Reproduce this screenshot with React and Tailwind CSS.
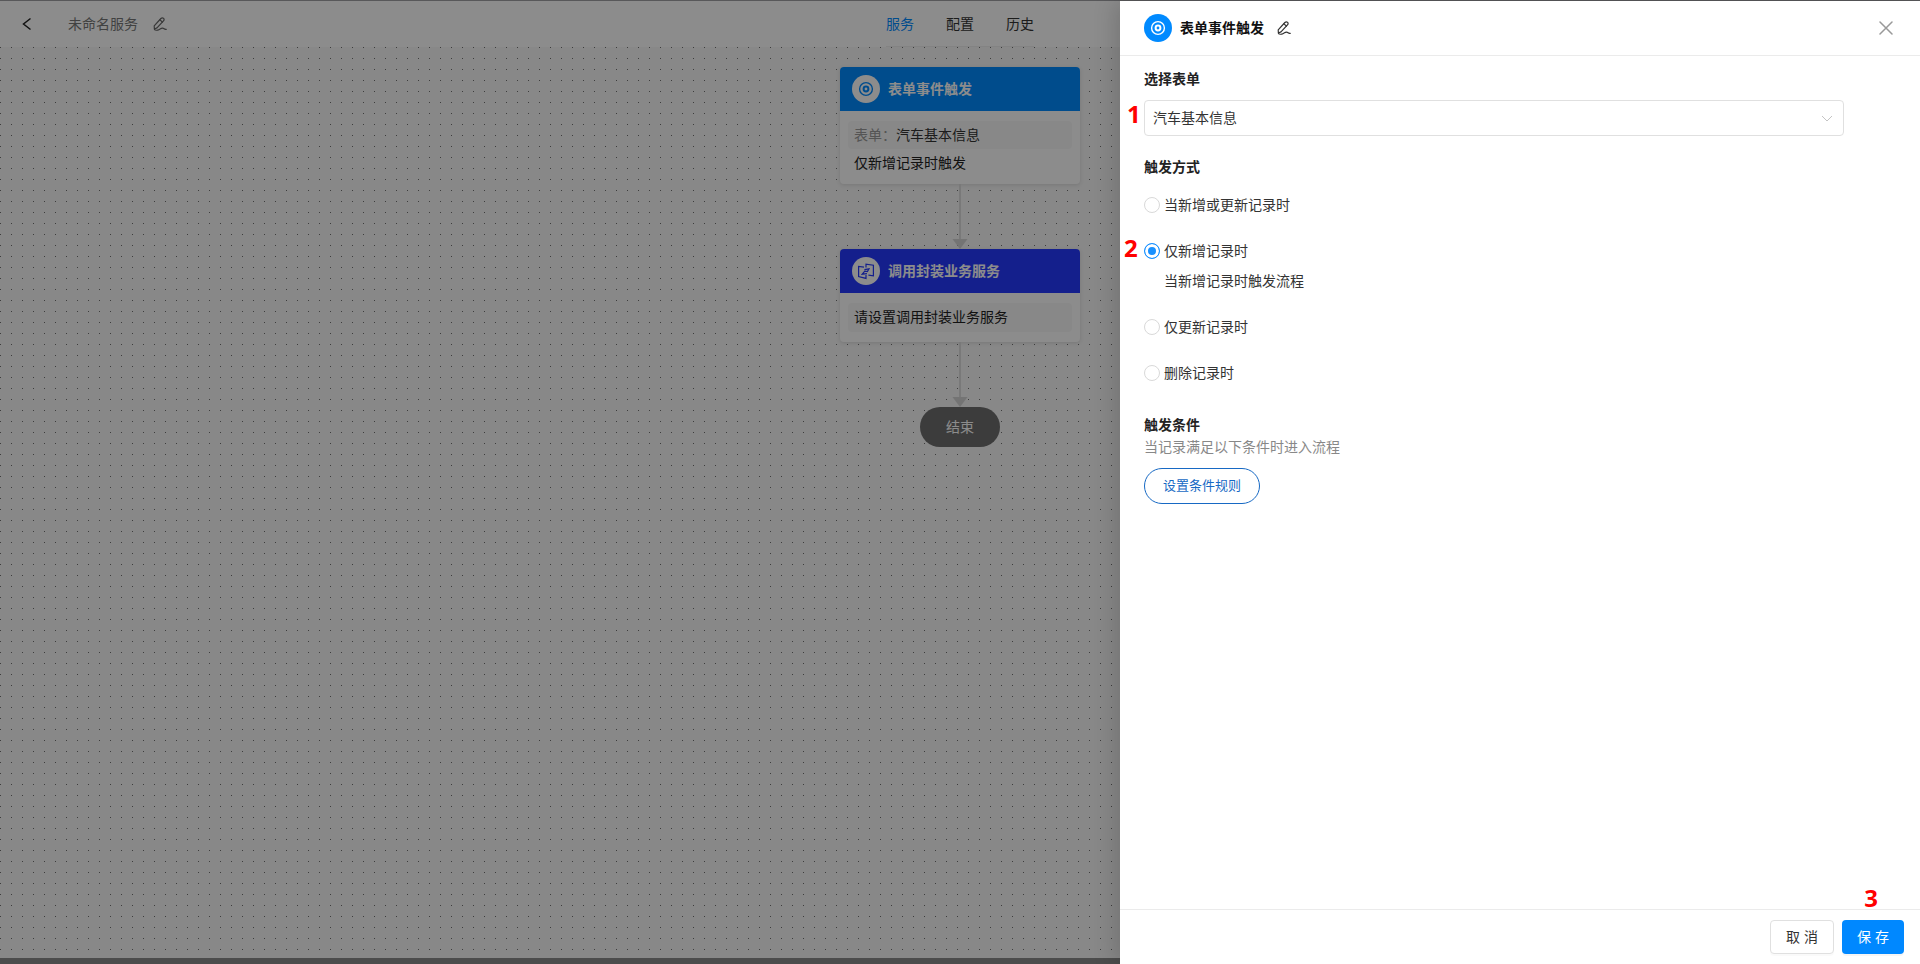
import { useState } from "react";

const TABS = ["服务", "配置", "历史"];

const TRIGGERS = [
  { id: "upsert", label: "当新增或更新记录时" },
  { id: "create", label: "仅新增记录时", hint: "当新增记录时触发流程" },
  { id: "update", label: "仅更新记录时" },
  { id: "delete", label: "删除记录时" },
];

function EditIcon() {
  return (
    <svg width="14" height="14" viewBox="0 0 14 14" fill="none" stroke="currentColor" strokeWidth="1.2" strokeLinecap="round" strokeLinejoin="round">
      <path d="M1.4 12 1.2 8.8 7.9 1.5Q9.2.3 10.4 1.2T10.7 3.7L4 10.9Z" />
      <path d="M6.9 2.9 9.4 5" />
      <path d="M1.4 12C1.4 13.6 4.6 13.4 5.8 12.8 7.4 12 8 11.2 9.6 11.2 11.2 11.2 11.2 12.8 13.3 12.3" />
    </svg>
  );
}

function TargetIcon() {
  return (
    <svg width="16" height="16" viewBox="0 0 16 16" fill="none" stroke="currentColor">
      <circle cx="8" cy="8" r="6.4" strokeWidth="1.4" />
      <circle cx="8" cy="8" r="2.4" strokeWidth="2" />
    </svg>
  );
}

function ServiceIcon() {
  return (
    <svg width="18" height="18" viewBox="0 0 18 18" fill="none" stroke="currentColor" strokeWidth="1.2">
      <path d="M7 5.2 1.6 4.4V14.6L9 16.4V13" />
      <path d="M9 5.6V2.2L16.4 3.2V13.8L11.4 13.2" />
      <path d="M7.4 7.6 12 6.8 10.4 9.6 7.8 9.2 5.2 12.2 10 11.6" />
    </svg>
  );
}

function Connector() {
  return (
    <div className="flex flex-col items-center text-[#d4d4d4]">
      <div className="h-[55px] w-0.5 bg-[#dcdcdc]"></div>
      <svg width="16" height="10" viewBox="0 0 16 10" fill="currentColor">
        <path d="M.5 0H15.5L8 10Z" />
      </svg>
    </div>
  );
}

function NodeCard({ title, icon, headClass, children }) {
  return (
    <section className="w-60 overflow-hidden rounded bg-white shadow-[0_1px_4px_rgba(0,0,0,0.12)]">
      <div className={`flex h-11 items-center gap-2 px-3 ${headClass}`}>
        <span className="flex size-7 items-center justify-center rounded-full bg-white">{icon}</span>
        <h2 className="font-bold text-white">{title}</h2>
      </div>
      <div className="px-2 py-2.5">{children}</div>
    </section>
  );
}

function Flow() {
  return (
    <main className="flex flex-1 flex-col items-center bg-[#f7f7f7] bg-[conic-gradient(from_270deg_at_1px_1px,#707070_90deg,transparent_0)] bg-[length:11px_11px] pt-5">
      <NodeCard
        title="表单事件触发"
        headClass="bg-[#008aff] text-[#008aff]"
        icon={<TargetIcon />}
      >
        <p className="rounded bg-[#f8f8f8] px-1.5 leading-7 text-[#333]">
          <span className="text-[#999]">表单：</span>汽车基本信息
        </p>
        <p className="px-1.5 pt-1 leading-[21px] text-[#222]">仅新增记录时触发</p>
      </NodeCard>
      <Connector />
      <NodeCard
        title="调用封装业务服务"
        headClass="bg-[#263aff] text-[#263aff]"
        icon={<ServiceIcon />}
      >
        <p className="rounded bg-[#f8f8f8] px-1.5 leading-[29px] text-[#222]">请设置调用封装业务服务</p>
      </NodeCard>
      <Connector />
      <div className="flex h-10 w-20 items-center justify-center rounded-full bg-[#6e6e6e] text-white">结束</div>
    </main>
  );
}

function Header() {
  return (
    <header className="grid h-[46px] grid-cols-[1fr_auto_1fr] items-center bg-white">
      <div className="flex items-center pl-5">
        <button type="button" aria-label="返回" className="mr-9">
          <svg width="12" height="14" viewBox="0 0 12 14" fill="none" stroke="#222" strokeWidth="1.5">
            <path d="M10.5 1.5 3.5 7 10.5 12.5" />
          </svg>
        </button>
        <span className="mr-[15px] text-[#777]">未命名服务</span>
        <button type="button" aria-label="编辑名称" className="text-[#666]">
          <EditIcon />
        </button>
      </div>
      <nav className="flex h-full items-center gap-8 border-b border-[#eee]">
        {TABS.map((tab, i) => (
          <a key={tab} href="#" className={i === 0 ? "text-[#008aff]" : "text-[#333]"}>
            {tab}
          </a>
        ))}
      </nav>
    </header>
  );
}

function Step({ children, className }) {
  return (
    <span className={`absolute font-['Open_Sans','Noto_Sans',sans-serif] text-2xl leading-6 font-bold text-[#ff0000] ${className}`}>
      {children}
    </span>
  );
}

function Drawer() {
  const [trigger, setTrigger] = useState("create");

  return (
    <aside className="absolute inset-y-0 right-0 flex w-[800px] max-w-full flex-col bg-white text-[#333] shadow-[-6px_0_20px_rgba(0,0,0,0.15)]">
      <div className="flex h-[55px] items-center border-b border-[#ebebeb] px-6">
        <span className="mr-2 flex size-7 items-center justify-center rounded-full bg-[#008aff] text-white">
          <TargetIcon />
        </span>
        <h1 className="mr-[13px] font-bold text-[#111]">表单事件触发</h1>
        <button type="button" aria-label="编辑节点名称" className="text-[#333]">
          <EditIcon />
        </button>
        <button type="button" aria-label="关闭" className="ml-auto pr-[3px]">
          <svg width="14" height="14" viewBox="0 0 14 14" fill="none" stroke="#999" strokeWidth="1.5" strokeLinecap="round">
            <path d="M1 1 13 13M13 1 1 13" />
          </svg>
        </button>
      </div>

      <div className="flex-1 px-6 pt-3 leading-[22px]">
        <label htmlFor="form" className="block font-bold text-[#222]">选择表单</label>
        <div className="relative mt-2.5 max-w-[700px]">
          <Step className="-left-[17px] top-0.5">1</Step>
          <select id="form" className="h-9 w-full appearance-none rounded border border-[#e0e0e0] bg-white px-2">
            <option>汽车基本信息</option>
          </select>
          <svg className="pointer-events-none absolute top-[15px] right-[11px]" width="12" height="7" viewBox="0 0 12 7" fill="none" stroke="#c4c4c4">
            <path d="M1 1 6 6 11 1" />
          </svg>
        </div>

        <fieldset className="mt-5">
          <legend className="font-bold text-[#222]">触发方式</legend>
          <div className="mt-4 flex flex-col gap-6">
            {TRIGGERS.map((item) => (
              <div key={item.id} className="relative">
                {item.id === "create" && <Step className="-left-5 -top-1">2</Step>}
                <label className="flex items-center gap-1">
                  <input
                    type="radio"
                    name="trigger"
                    checked={trigger === item.id}
                    onChange={() => setTrigger(item.id)}
                    className="size-4 appearance-none rounded-full border border-[#d9d9d9] bg-white checked:border-[#1890ff] checked:bg-[#1890ff] checked:shadow-[inset_0_0_0_3px_#fff]"
                  />
                  {item.label}
                </label>
                {trigger === item.id && item.hint && <p className="mt-2 pl-5">{item.hint}</p>}
              </div>
            ))}
          </div>
        </fieldset>

        <h2 className="mt-[30px] font-bold text-[#222]">触发条件</h2>
        <p className="text-[#888]">当记录满足以下条件时进入流程</p>
        <button type="button" className="mt-2.5 h-9 rounded-full border border-[#1769c4] px-[18px] text-[13px] text-[#1769c4]">
          设置条件规则
        </button>
      </div>

      <div className="relative flex justify-end gap-2 border-t border-[#ebebeb] px-4 py-2.5">
        <Step className="right-[42px] -top-6">3</Step>
        <button type="button" className="h-[34px] w-16 rounded border border-[#e0e0e0] bg-white shadow-[0_2px_0_rgba(0,0,0,0.02)]">取 消</button>
        <button type="button" className="h-[34px] w-[62px] rounded bg-[#0088ff] text-white shadow-[0_2px_0_rgba(0,0,0,0.04)]">保 存</button>
      </div>
    </aside>
  );
}

export default function App() {
  return (
    <div className="relative flex min-h-screen flex-col border-t border-[#58585a] font-['Liberation_Sans','Noto_Sans_CJK_SC',sans-serif] text-sm">
      <Header />
      <Flow />
      <div className="h-1.5 bg-[#8a8a8a]"></div>
      <div className="absolute inset-0 bg-black/45"></div>
      <Drawer />
    </div>
  );
}
